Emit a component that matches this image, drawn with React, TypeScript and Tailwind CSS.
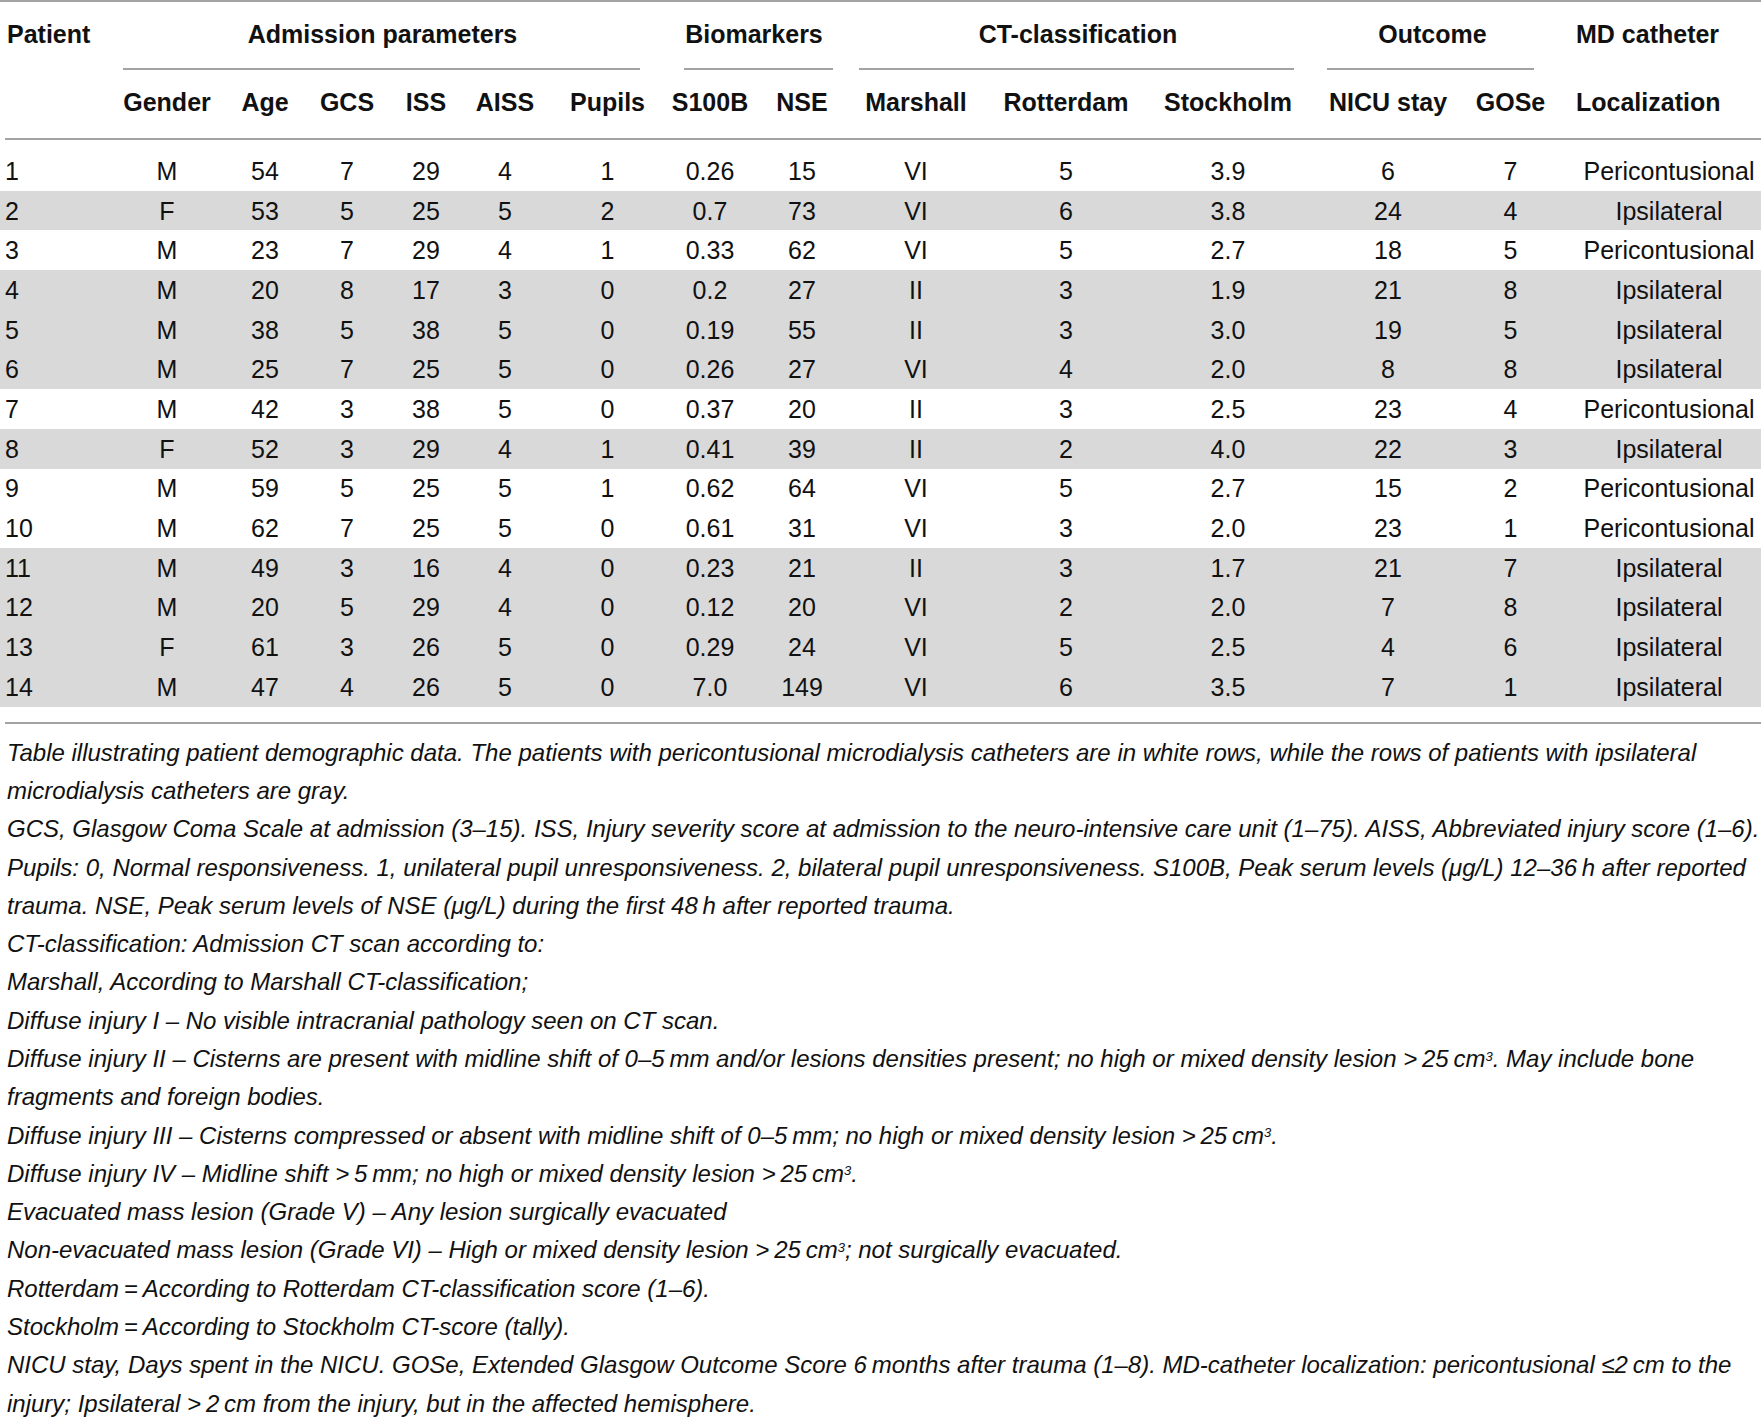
import React from "react"

type Row = {
  id: number
  gender: string
  age: number
  gcs: number
  iss: number
  aiss: number
  pupils: number
  s100b: string
  nse: number
  marshall: string
  rotterdam: number
  stockholm: string
  nicu: number
  gose: number
  loc: string
}

const rows: Row[] = [
  { id: 1, gender: "M", age: 54, gcs: 7, iss: 29, aiss: 4, pupils: 1, s100b: "0.26", nse: 15, marshall: "VI", rotterdam: 5, stockholm: "3.9", nicu: 6, gose: 7, loc: "Pericontusional" },
  { id: 2, gender: "F", age: 53, gcs: 5, iss: 25, aiss: 5, pupils: 2, s100b: "0.7", nse: 73, marshall: "VI", rotterdam: 6, stockholm: "3.8", nicu: 24, gose: 4, loc: "Ipsilateral" },
  { id: 3, gender: "M", age: 23, gcs: 7, iss: 29, aiss: 4, pupils: 1, s100b: "0.33", nse: 62, marshall: "VI", rotterdam: 5, stockholm: "2.7", nicu: 18, gose: 5, loc: "Pericontusional" },
  { id: 4, gender: "M", age: 20, gcs: 8, iss: 17, aiss: 3, pupils: 0, s100b: "0.2", nse: 27, marshall: "II", rotterdam: 3, stockholm: "1.9", nicu: 21, gose: 8, loc: "Ipsilateral" },
  { id: 5, gender: "M", age: 38, gcs: 5, iss: 38, aiss: 5, pupils: 0, s100b: "0.19", nse: 55, marshall: "II", rotterdam: 3, stockholm: "3.0", nicu: 19, gose: 5, loc: "Ipsilateral" },
  { id: 6, gender: "M", age: 25, gcs: 7, iss: 25, aiss: 5, pupils: 0, s100b: "0.26", nse: 27, marshall: "VI", rotterdam: 4, stockholm: "2.0", nicu: 8, gose: 8, loc: "Ipsilateral" },
  { id: 7, gender: "M", age: 42, gcs: 3, iss: 38, aiss: 5, pupils: 0, s100b: "0.37", nse: 20, marshall: "II", rotterdam: 3, stockholm: "2.5", nicu: 23, gose: 4, loc: "Pericontusional" },
  { id: 8, gender: "F", age: 52, gcs: 3, iss: 29, aiss: 4, pupils: 1, s100b: "0.41", nse: 39, marshall: "II", rotterdam: 2, stockholm: "4.0", nicu: 22, gose: 3, loc: "Ipsilateral" },
  { id: 9, gender: "M", age: 59, gcs: 5, iss: 25, aiss: 5, pupils: 1, s100b: "0.62", nse: 64, marshall: "VI", rotterdam: 5, stockholm: "2.7", nicu: 15, gose: 2, loc: "Pericontusional" },
  { id: 10, gender: "M", age: 62, gcs: 7, iss: 25, aiss: 5, pupils: 0, s100b: "0.61", nse: 31, marshall: "VI", rotterdam: 3, stockholm: "2.0", nicu: 23, gose: 1, loc: "Pericontusional" },
  { id: 11, gender: "M", age: 49, gcs: 3, iss: 16, aiss: 4, pupils: 0, s100b: "0.23", nse: 21, marshall: "II", rotterdam: 3, stockholm: "1.7", nicu: 21, gose: 7, loc: "Ipsilateral" },
  { id: 12, gender: "M", age: 20, gcs: 5, iss: 29, aiss: 4, pupils: 0, s100b: "0.12", nse: 20, marshall: "VI", rotterdam: 2, stockholm: "2.0", nicu: 7, gose: 8, loc: "Ipsilateral" },
  { id: 13, gender: "F", age: 61, gcs: 3, iss: 26, aiss: 5, pupils: 0, s100b: "0.29", nse: 24, marshall: "VI", rotterdam: 5, stockholm: "2.5", nicu: 4, gose: 6, loc: "Ipsilateral" },
  { id: 14, gender: "M", age: 47, gcs: 4, iss: 26, aiss: 5, pupils: 0, s100b: "7.0", nse: 149, marshall: "VI", rotterdam: 6, stockholm: "3.5", nicu: 7, gose: 1, loc: "Ipsilateral" },
]

const cols =
  "grid grid-cols-[103px_128px_68px_96px_62px_96px_109px_96px_88px_140px_160px_164px_156px_89px_206px]"

const subHeads = ["Gender", "Age", "GCS", "ISS", "AISS", "Pupils", "S100B", "NSE", "Marshall", "Rotterdam", "Stockholm", "NICU stay", "GOSe"]

// thin space
const t = "\u2009"

const cube = <sup className="text-[13px]">3</sup>

const notes: React.ReactNode[] = [
  "Table illustrating patient demographic data. The patients with pericontusional microdialysis catheters are in white rows, while the rows of patients with ipsilateral",
  "microdialysis catheters are gray.",
  "GCS, Glasgow Coma Scale at admission (3–15). ISS, Injury severity score at admission to the neuro-intensive care unit (1–75). AISS, Abbreviated injury score (1–6).",
  `Pupils: 0, Normal responsiveness. 1, unilateral pupil unresponsiveness. 2, bilateral pupil unresponsiveness. S100B, Peak serum levels (μg/L) 12–36${t}h after reported`,
  `trauma. NSE, Peak serum levels of NSE (μg/L) during the first 48${t}h after reported trauma.`,
  "CT-classification: Admission CT scan according to:",
  "Marshall, According to Marshall CT-classification;",
  "Diffuse injury I – No visible intracranial pathology seen on CT scan.",
  <>Diffuse injury II – Cisterns are present with midline shift of 0–5{t}mm and/or lesions densities present; no high or mixed density lesion &gt;{t}25{t}cm{cube}. May include bone</>,
  "fragments and foreign bodies.",
  <>Diffuse injury III – Cisterns compressed or absent with midline shift of 0–5{t}mm; no high or mixed density lesion &gt;{t}25{t}cm{cube}.</>,
  <>Diffuse injury IV – Midline shift &gt;{t}5{t}mm; no high or mixed density lesion &gt;{t}25{t}cm{cube}.</>,
  "Evacuated mass lesion (Grade V) – Any lesion surgically evacuated",
  <>Non-evacuated mass lesion (Grade VI) – High or mixed density lesion &gt;{t}25{t}cm{cube}; not surgically evacuated.</>,
  `Rotterdam${t}=${t}According to Rotterdam CT-classification score (1–6).`,
  `Stockholm${t}=${t}According to Stockholm CT-score (tally).`,
  `NICU stay, Days spent in the NICU. GOSe, Extended Glasgow Outcome Score 6${t}months after trauma (1–8). MD-catheter localization: pericontusional ≤2${t}cm to the`,
  `injury; Ipsilateral >${t}2${t}cm from the injury, but in the affected hemisphere.`,
]

const gray = new Set([2, 4, 5, 6, 8, 11, 12, 13, 14])

export default function App() {
  return (
    <div className="w-[1761px] h-[1418px] overflow-hidden bg-white text-[#111] font-['Liberation_Sans',Arial,sans-serif]">
      {/* group headings */}
      <div className={`${cols} h-[70px] border-t-2 border-[#a3a3a3] text-[25px] font-bold leading-[30px]`}>
        <div className="pt-[17px] pl-[7px]">Patient</div>
        <div className="col-span-6 flex flex-col">
          <div className="pt-[17px] text-center">Admission parameters</div>
          <div className="mt-auto ml-[20px] mr-[22px] border-b-2 border-[#a3a3a3]" />
        </div>
        <div className="col-span-2 flex flex-col">
          <div className="pt-[17px] text-center">Biomarkers</div>
          <div className="mt-auto ml-[22px] mr-[13px] border-b-2 border-[#a3a3a3]" />
        </div>
        <div className="col-span-3 flex flex-col">
          <div className="pt-[17px] text-center">CT-classification</div>
          <div className="mt-auto ml-[13px] mr-[16px] border-b-2 border-[#a3a3a3]" />
        </div>
        <div className="col-span-2 flex flex-col">
          <div className="pt-[17px] text-center">Outcome</div>
          <div className="mt-auto ml-[17px] mr-[21px] border-b-2 border-[#a3a3a3]" />
        </div>
        <div className="pt-[17px] pl-[21px]">MD catheter</div>
      </div>

      {/* sub headings */}
      <div className={`${cols} h-[68px] text-[25px] font-bold leading-[30px]`}>
        <div />
        {subHeads.map((h) => (
          <div key={h} className="pt-[17px] text-center whitespace-nowrap">
            {h}
          </div>
        ))}
        <div className="pt-[17px] pl-[21px]">Localization</div>
      </div>
      <div className="ml-[5px] border-t-2 border-[#a3a3a3]" />

      {/* body */}
      <div className="pt-[11px] text-[25px] leading-[30px]">
        {rows.map((r) => (
          <div key={r.id} className={`${cols} h-[39.7px] items-center ${gray.has(r.id) ? "bg-[#d9d9d9]" : ""}`}>
            <div className="pl-[5px]">{r.id}</div>
            <div className="text-center">{r.gender}</div>
            <div className="text-center">{r.age}</div>
            <div className="text-center">{r.gcs}</div>
            <div className="text-center">{r.iss}</div>
            <div className="text-center">{r.aiss}</div>
            <div className="text-center">{r.pupils}</div>
            <div className="text-center">{r.s100b}</div>
            <div className="text-center">{r.nse}</div>
            <div className="text-center">{r.marshall}</div>
            <div className="text-center">{r.rotterdam}</div>
            <div className="text-center">{r.stockholm}</div>
            <div className="text-center">{r.nicu}</div>
            <div className="text-center">{r.gose}</div>
            <div className="pl-[22px] text-center whitespace-nowrap">{r.loc}</div>
          </div>
        ))}
      </div>
      <div className="mt-[15px] ml-[5px] border-t-2 border-[#a3a3a3]" />

      {/* footnotes */}
      <div className="flex flex-col gap-[11.3px] pt-[15px] pl-[7px] text-[24px] italic leading-[27px] whitespace-nowrap">
        {notes.map((n, i) => (
          <div key={i}>{n}</div>
        ))}
      </div>
    </div>
  )
}
